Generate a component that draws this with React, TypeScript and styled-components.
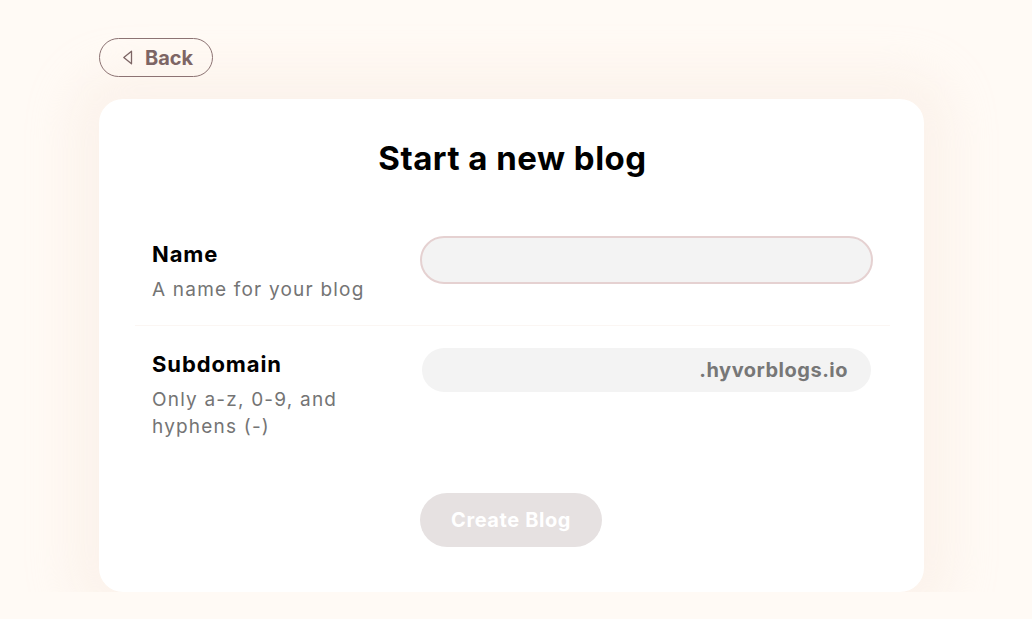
import React from "react";
import styled, { createGlobalStyle } from "styled-components";

const GlobalStyle = createGlobalStyle`
  * { box-sizing: border-box; }
  body {
    margin: 0;
    background: #fffaf5;
    font-family: "Inter", "Noto Sans", sans-serif;
    color: #000;
  }
`;

const Page = styled.div`
  padding: 38px 0 0 99px;
  width: 924px;
`;

const BackButton = styled.button`
  display: inline-flex;
  align-items: center;
  gap: 12px;
  height: 39px;
  padding: 0 19px 0 22px;
  border: 1px solid #8c7373;
  border-radius: 20px;
  background: transparent;
  color: #7d6565;
  font-family: inherit;
  font-size: 20px;
  font-weight: 700;
  cursor: pointer;
`;

const Card = styled.div`
  margin-top: 22px;
  width: 825px;
  background: #fff;
  border-radius: 24px;
  box-shadow: 0 0 40px 30px rgba(245, 232, 222, 0.35);
  padding: 38px 34px 45px 36px;
`;

const Title = styled.h1`
  margin: 0;
  text-align: center;
  font-size: 33px;
  line-height: 42px;
  font-weight: 700;
  letter-spacing: 0.5px;
`;

const Rows = styled.div`
  margin-top: 37px;
`;

const Row = styled.div<{ $divided?: boolean }>`
  display: flex;
  padding: 20px 17px 22px;
  border-bottom: ${(p) => (p.$divided ? "1px solid #fbf6f3" : "none")};
`;

const LabelCol = styled.div`
  width: 268px;
  flex-shrink: 0;
  padding-right: 40px;
  padding-top: 4px;
`;

const Label = styled.div`
  font-size: 22px;
  font-weight: 700;
  line-height: 28px;
  letter-spacing: 0.9px;
`;

const Description = styled.div`
  margin-top: 8px;
  font-size: 19px;
  line-height: 27px;
  letter-spacing: 1.2px;
  color: #747474;
`;

const InputWrap = styled.div<{ $focused?: boolean }>`
  flex: 1;
  min-width: 0;
  display: flex;
  align-items: center;
  height: ${(p) => (p.$focused ? "48px" : "44px")};
  margin: ${(p) => (p.$focused ? "0" : "2px 2px 0")};
  border-radius: 24px;
  background: #f3f3f3;
  border: ${(p) => (p.$focused ? "2px solid #e5d1d1" : "none")};
  padding: 0 23px 0 22px;
`;

const Input = styled.input`
  flex: 1;
  min-width: 0;
  border: none;
  outline: none;
  background: transparent;
  font-family: inherit;
  font-size: 19px;
`;

const Suffix = styled.span`
  font-size: 20px;
  font-weight: 700;
  letter-spacing: 0.5px;
  color: #777;
`;

const Actions = styled.div`
  padding: 31px 0 0 285px;
`;

const CreateButton = styled.button`
  height: 54px;
  padding: 0 31px;
  border: none;
  border-radius: 27px;
  background: #e6e1e1;
  color: #fff;
  font-family: inherit;
  font-size: 20px;
  font-weight: 700;
  letter-spacing: 0.6px;
`;

const BackIcon = () => (
  <svg width="11" height="15" viewBox="0 0 11 15" fill="none">
    <path d="M9.5 1.2 L1.8 7.5 L9.5 13.8 Z" stroke="#7d6565" strokeWidth="1.3" strokeLinejoin="round" />
  </svg>
);

export default function App() {
  return (
    <>
      <GlobalStyle />
      <Page>
        <BackButton>
          <BackIcon />
          Back
        </BackButton>
        <Card>
          <Title>Start a new blog</Title>
          <Rows>
            <Row $divided>
              <LabelCol>
                <Label>Name</Label>
                <Description>A name for your blog</Description>
              </LabelCol>
              <InputWrap $focused>
                <Input />
              </InputWrap>
            </Row>
            <Row>
              <LabelCol>
                <Label>Subdomain</Label>
                <Description>Only a-z, 0-9, and hyphens (-)</Description>
              </LabelCol>
              <InputWrap>
                <Input />
                <Suffix>.hyvorblogs.io</Suffix>
              </InputWrap>
            </Row>
          </Rows>
          <Actions>
            <CreateButton>Create Blog</CreateButton>
          </Actions>
        </Card>
      </Page>
    </>
  );
}
